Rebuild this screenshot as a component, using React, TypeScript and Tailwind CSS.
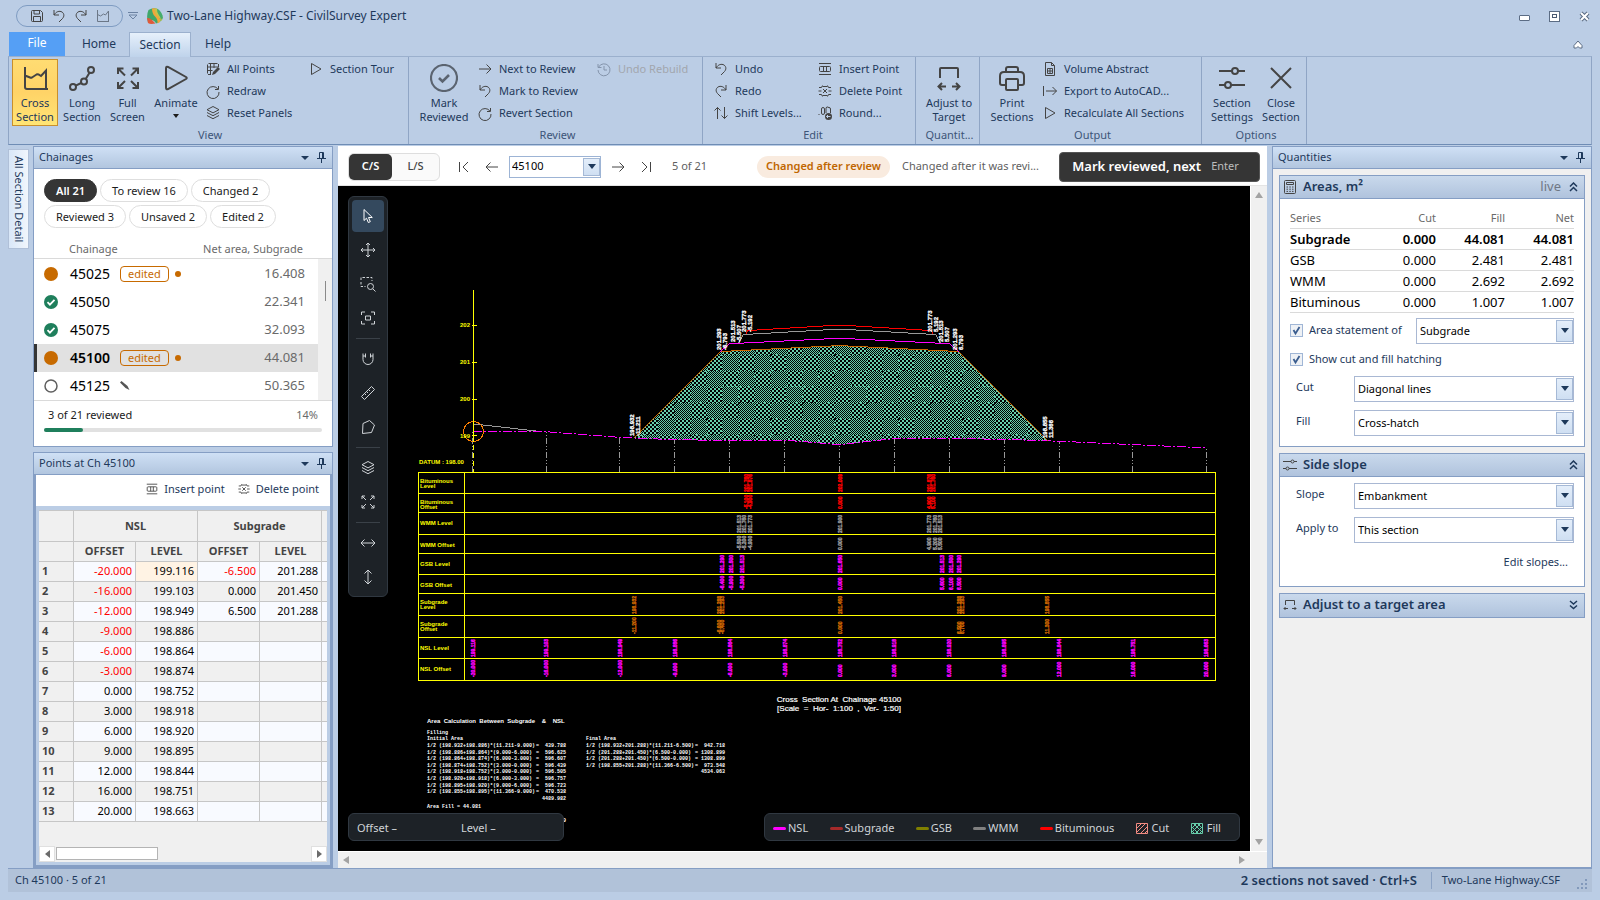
import React from 'react';

const INK = '#1e395b';

// ---------- Icons ----------

interface IconProps {
  size?: number;
  children: React.ReactNode;
  className?: string;
}

// Small line icons live on a 16 unit grid, the stroke is always 1 unit
const Icon: React.FC<IconProps> = ({ size = 16, children, className = 'text-[#444]' }) => (
  <svg width={size} height={size} viewBox="0 0 16 16" fill="none" stroke="currentColor" strokeLinejoin="round" className={`shrink-0 ${className}`} aria-hidden="true">
    {children}
  </svg>
);

const icons = {
  save: <path d="M2.5 3.5a1 1 0 0 1 1-1h8l2 2v8a1 1 0 0 1-1 1h-9a1 1 0 0 1-1-1zM5 2.5v3.5h5.500v-3.5M4.500 13.500v-5h7v5" />,
  undo: <path d="M3 2v5h5M3 7c2-3.500 5.500-4.500 8-3 2.500 1.700 2.300 4.500.5 6.500L8 14" />,
  redo: <path d="M13 2v5H8M13 7C11 3.500 7.500 2.500 5 4 2.500 5.700 2.700 8.500 4.500 10.500L8 14" />,
  chart: <path d="M2.500 2v11.500H14M2.500 6.500l3 1.500 3-2 2 1 3-4v10.500" />,
  play: <path d="M3.500 2.500v11l9.500-5.500z" />,
  refresh: <path d="M13.500 3v3.500H10M13 6.200A6 6 0 1 0 14 9" />,
  layers: <path d="M8 1.500l6 3.200-6 3.200-6-3.200zM2 7.500l6 3.200 6-3.200M2 10.500l6 3.200 6-3.200" />,
  table: (
    <>
      <path d="M3.500 2.500h9M2.500 6h11M2.500 9.500h5M5.500 2v11M9 2v5M3 13.500h3M2.500 3.500v9M13.500 3v3" />
      <path d="M7 14l1-3 5-5 2 2-5 5z" fill="currentColor" stroke="none" />
    </>
  ),
  arrowRight: <path d="M2 8h12M9.500 3.500L14 8l-4.500 4.500" />,
  arrowLeft: <path d="M14 8H2M6.500 3.500L2 8l4.500 4.500" />,
  first: <path d="M3.500 3v10M12 3L7 8l5 5" />,
  last: <path d="M12.500 3v10M4 3l5 5-5 5" />,
  history: <path d="M2 3v3.500h3.500M2.700 6A6 6 0 1 1 2 9M8 5v4h3" />,
  upDown: <path d="M4.500 14V2.500M1.500 5.500l3-3 3 3M11.500 2v11.500M8.500 10.500l3 3 3-3" />,
  insertRow: <path d="M2 2.500h12M2 13.500h12M3.500 5.500h9a1 1 0 0 1 1 1v3a1 1 0 0 1-1 1h-9a1 1 0 0 1-1-1v-3a1 1 0 0 1 1-1zM6.500 5.500v5M9.500 5.500v5" />,
  deleteRow: <path d="M2 4.500h2.500l1-2M14 4.500h-2.500l-1-2M5.500 3.500h5M2 11.500h2.500l1 2M14 11.500h-2.500l-1 2M5.500 12.500h5M1.500 8h3M11.500 8h3M6 6l4 4M10 6l-4 4" />,
  round: (
    <>
      <path d="M1.500 9.500h1M6 2.500a1.500 1.500 0 0 1 1.500 1.500v4a1.500 1.500 0 0 1-3 0V4A1.500 1.500 0 0 1 6 2.500zM12 2.500a1.500 1.500 0 0 1 1.500 1.500v4M9 8V4a1.500 1.500 0 0 1 3-1" />
      <circle cx="11.500" cy="11.500" r="3.500" fill="currentColor" stroke="none" />
      <path d="M13.500 11.500h-4M11 10l-1.500 1.500L11 13" stroke="#bbcde5" />
    </>
  ),
  sheet: <path d="M3.500 1.500h6l3 3v10h-9zM9.500 1.500v3h3M5.500 7.500h5v5h-5zM8 7.500v5M5.500 10h5" />,
  exportTo: <path d="M1.500 3v10M4 8h10.500M10.500 4L14.500 8l-4 4" />,
  target: <path d="M3.500 8V3.500h9V8M6 11.500H2M3.500 10L2 11.500 3.500 13M10 11.500h4M12.500 10l1.500 1.500-1.500 1.500" />,
  sliders: <path d="M1 4.500h8M12 4.500h3M1 11.500h3M7 11.500h8M9 4.500a1.500 1.500 0 1 0 3 0 1.500 1.500 0 1 0-3 0M4 11.500a1.500 1.500 0 1 0 3 0 1.500 1.500 0 1 0-3 0" />,
  calc: <path d="M3.500 1.500h9a1 1 0 0 1 1 1v11a1 1 0 0 1-1 1h-9a1 1 0 0 1-1-1v-11a1 1 0 0 1 1-1zM4.500 3.500h7v2h-7zM4.500 8h1.500M7.300 8h1.500M10 8h1.500M4.500 10.200h1.500M7.300 10.200h1.500M10 10.200h1.500M4.500 12.400h1.500M7.300 12.400h1.500M10 12.400h1.500" />,
  cursor: <path d="M4 1.500v11l2.500-2.300L8.300 14.500l2-.8-1.800-4.200h3.800z" />,
  move: <path d="M8 1v14M1 8h14M6 3l2-2 2 2M6 13l2 2 2-2M3 6L1 8l2 2M13 6l2 2-2 2" />,
  zoomArea: (
    <>
      <path d="M1 4V1.500h11V5M1 6v4.500h4.500" strokeDasharray="2.500 1.500" />
      <path d="M7.500 10.500a3 3 0 1 0 6 0 3 3 0 1 0-6 0M12.800 12.800l2.700 2.700" />
    </>
  ),
  fit: <path d="M1.500 5V2h3.500M11 2h3.500v3M14.500 11v3H11M5 14H1.500v-3M5.500 6h5v4h-5z" />,
  magnet: <path d="M3 2.500v6a5 5 0 0 0 10 0v-6M3 5h2.500M10.500 5H13M5.500 2.500v4M10.500 2.500v4" />,
  ruler: <path d="M1.500 11.500l10-10 3 3-10 10zM4.500 8.500l1.500 1.500M6.500 6.500l1.500 1.500M8.500 4.500l1.500 1.500" />,
  polygon: <path d="M3 4.500L9.500 1.500l5 4.500-3 7.500-9 1z" />,
  expand: <path d="M2 5V2h3M2 2l4 4M11 2h3v3M14 2l-4 4M14 11v3h-3M14 14l-4-4M5 14H2v-3M2 14l4-4" />,
  horizontal: <path d="M1 8h14M4.500 4.500L1 8l3.500 3.500M11.500 4.500L15 8l-3.500 3.500" />,
  vertical: <path d="M8 1v14M4.500 4.500L8 1l3.500 3.500M4.500 11.500L8 15l3.500-3.500" />,
};

// Large ribbon icons on a 28 unit grid
const bigIcons = {
  cross: <path d="M4 3v20q0 2 2 2h21M4 11.500l5 2q1 .5 2 0l4.500-3q1-.5 2 0l2.500 1.500 5-5.500V25" />,
  long: (
    <>
      <circle cx="5" cy="23" r="3" />
      <circle cx="16" cy="17.500" r="3" />
      <circle cx="23" cy="6" r="3" />
      <path d="M7.700 21.700l5.500-2.700M17.700 15l3.800-6.300" />
    </>
  ),
  full: <path d="M4 10V4.500h5.500M4 4.500l7 7M18.500 4.500H24V10M24 4.500l-7 7M24 18v6h-5.500M24 24l-7-7M9.500 24H4v-6M4 24l7-7" />,
  play: <path d="M4 4.500v19q0 2.500 2 1.500l18-10q1.500-1 0-2L6 3Q4 2 4 4.500z" />,
  check: (
    <>
      <circle cx="14" cy="14" r="13" />
      <path d="M9 14l3.500 3.500 6.500-6.500" strokeWidth="2.600" />
    </>
  ),
  target: <path d="M5 14V5q0-1 1-1h16q1 0 1 1v9M11 22.500H4M7 19l-3.500 3.500L7 26M17 22.500h7M21 19l3.500 3.500L21 26" />,
  print: <path d="M8 8V5q0-2 2-2h8q2 0 2 2v3M8 21H4q-2 0-2-2v-7q0-4 4-4h16q4 0 4 4v7q0 2-2 2h-4M8 16q0-1 1-1h10q1 0 1 1v9q0 1-1 1H9q-1 0-1-1z" />,
  sliders: <path d="M1 7h13M20 7h7M1 21h6M13 21h14M14 7a3 3 0 1 0 6 0 3 3 0 1 0-6 0M7 21a3 3 0 1 0 6 0 3 3 0 1 0-6 0" />,
  close: <path d="M4 4l20 20M24 4L4 24" />,
};

const DoubleChevron: React.FC<{ down?: boolean }> = ({ down }) => (
  <svg width="9" height="10" viewBox="0 0 9 10" fill="none" stroke={INK} strokeWidth="1.500" aria-hidden="true">
    <path d={down ? 'M1 1l3.500 3L8 1M1 5.500l3.500 3L8 5.500' : 'M1 4.500L4.500 1 8 4.500M1 9l3.500-3.500L8 9'} />
  </svg>
);

// ---------- Ribbon ----------

interface BigButtonProps {
  icon: keyof typeof bigIcons;
  lines: string[];
  width: string;
  active?: boolean;
  menu?: boolean;
}

const BigButton: React.FC<BigButtonProps> = ({ icon, lines, width, active, menu }) => (
  <button
    type="button"
    className={`flex h-[67px] shrink-0 flex-col items-center border pt-1 leading-[14px] ${width} ${
      active ? 'border-[#c98f2c] bg-linear-to-b from-[#ffdc72] via-[#ffd367] to-[#ffe575]' : 'border-transparent'
    }`}
  >
    <svg width="28" height="28" viewBox="0 0 28 28" fill="none" stroke={icon === 'check' ? '#5b6470' : '#444'} strokeWidth={icon === 'check' ? 2.2 : 2} aria-hidden="true" className="mb-1">
      {bigIcons[icon]}
    </svg>
    {lines.map((line) => (
      <span key={line} className="whitespace-nowrap">{line}</span>
    ))}
    {menu && <span className="mt-1 border-x-3 border-t-4 border-x-transparent border-t-[#1c1c1c]" />}
  </button>
);

interface SmallItem {
  icon: keyof typeof icons;
  label: string;
  disabled?: boolean;
}

const SmallColumn: React.FC<{ items: SmallItem[]; className?: string }> = ({ items, className = '' }) => (
  <div className={`-mt-px shrink-0 ${className}`}>
    {items.map((item) => (
      <button
        key={item.label}
        type="button"
        disabled={item.disabled}
        className={`flex h-[22px] items-center gap-[6px] whitespace-nowrap pl-[2px] ${item.disabled ? 'text-[#a2a6ad]' : ''}`}
      >
        <Icon className={item.disabled ? 'text-[#8494ab]' : 'text-[#444]'}>{icons[item.icon]}</Icon>
        {item.label}
      </button>
    ))}
  </div>
);

const RibbonGroup: React.FC<{ title: string; className: string; children: React.ReactNode }> = ({ title, className, children }) => (
  <section className={`flex shrink-0 flex-col border-r border-[#8fa5c5] ${className}`}>
    <div className="flex h-[70px] pt-[2px]">{children}</div>
    <div className="text-center leading-[16px] text-[#3d5578]">{title}</div>
  </section>
);

const Ribbon: React.FC = () => (
  <div className="mx-2 flex h-[89px] shrink-0 overflow-hidden border border-t-[#9bb0cd] border-r-[#8fa5c5] border-b-[#6f8db5] border-l-[#8fa5c5]">
    <RibbonGroup title="View" className="w-[400px] pl-[3px]">
      <BigButton icon="cross" lines={['Cross', 'Section']} width="w-[46px]" active />
      <BigButton icon="long" lines={['Long', 'Section']} width="w-[48px]" />
      <BigButton icon="full" lines={['Full', 'Screen']} width="w-[43px]" />
      <BigButton icon="play" lines={['Animate']} width="w-[54px]" menu />
      <SmallColumn
        className="w-[103px]"
        items={[
          { icon: 'table', label: 'All Points' },
          { icon: 'refresh', label: 'Redraw' },
          { icon: 'layers', label: 'Reset Panels' },
        ]}
      />
      <SmallColumn items={[{ icon: 'play', label: 'Section Tour' }]} />
    </RibbonGroup>
    <RibbonGroup title="Review" className="w-[294px] pl-1">
      <BigButton icon="check" lines={['Mark', 'Reviewed']} width="w-[62px]" />
      <SmallColumn
        className="w-[119px]"
        items={[
          { icon: 'arrowRight', label: 'Next to Review' },
          { icon: 'undo', label: 'Mark to Review' },
          { icon: 'refresh', label: 'Revert Section' },
        ]}
      />
      <SmallColumn items={[{ icon: 'history', label: 'Undo Rebuild', disabled: true }]} />
    </RibbonGroup>
    <RibbonGroup title="Edit" className="w-[213px] pl-2">
      <SmallColumn
        className="w-[104px]"
        items={[
          { icon: 'undo', label: 'Undo' },
          { icon: 'redo', label: 'Redo' },
          { icon: 'upDown', label: 'Shift Levels...' },
        ]}
      />
      <SmallColumn
        items={[
          { icon: 'insertRow', label: 'Insert Point' },
          { icon: 'deleteRow', label: 'Delete Point' },
          { icon: 'round', label: 'Round...' },
        ]}
      />
    </RibbonGroup>
    <RibbonGroup title="Quantit..." className="w-[64px] pl-1">
      <BigButton icon="target" lines={['Adjust to', 'Target']} width="w-[58px]" />
    </RibbonGroup>
    <RibbonGroup title="Output" className="w-[222px] pl-1">
      <BigButton icon="print" lines={['Print', 'Sections']} width="w-[56px]" />
      <SmallColumn
        items={[
          { icon: 'sheet', label: 'Volume Abstract' },
          { icon: 'exportTo', label: 'Export to AutoCAD...' },
          { icon: 'play', label: 'Recalculate All Sections' },
        ]}
      />
    </RibbonGroup>
    <RibbonGroup title="Options" className="w-[105px] pl-1">
      <BigButton icon="sliders" lines={['Section', 'Settings']} width="w-[52px]" />
      <BigButton icon="close" lines={['Close', 'Section']} width="w-[46px]" />
    </RibbonGroup>
  </div>
);

const TitleBar: React.FC = () => (
  <header className="flex h-8 shrink-0 items-center pl-4 pr-[10px]">
    <div className="flex h-[22px] w-[107px] items-center justify-center gap-[6px] rounded-full border border-[#7f9cc2]">
      {(['save', 'undo', 'redo', 'chart'] as const).map((name) => (
        <button key={name} type="button" aria-label={name}>
          <Icon className={name === 'chart' ? 'text-[#6b7787]' : 'text-[#444]'}>{icons[name]}</Icon>
        </button>
      ))}
    </div>
    <svg width="10" height="8" viewBox="0 0 10 8" fill="none" stroke="#6c83a3" className="ml-[5px]" aria-hidden="true">
      <path d="M0 .5h10M1 3l4 4 4-4z" />
    </svg>
    <svg width="16" height="16" viewBox="0 0 16 16" className="ml-[9px]" aria-hidden="true">
      <path d="M1.500 2Q5-.5 9.500.5q1 3 3 5.500t3.500 3.500q-1 4-7 6-1.500-3.500-5-3.500l-3 2.500q-2-7 .5-12.500z" fill="#3fa66a" />
      <path d="M0 10q2.500-.5 5 2l3.500 3.500Q3 16.500 1 15z" fill="#df5a3a" />
      <path d="M5 .5q2-.5 3 0 .5 4 3 7t2 6.500l-2.500 1.500q.5-4-2.500-7T5 .5z" fill="#f2a63b" />
      <path d="M7.500.5q2-.5 3 .5.500 3 3 5t1.500 6l-1.500 1.500q0-3-3-5.500T7.500.5z" fill="#c9c24a" />
      <path d="M10 .8q4 1.700 5.800 7.200-.3 2.500-1.800 4-.2-3-2.200-5T10 .8z" fill="#45ad6c" />
    </svg>
    <h1 className="ml-1 text-xs text-[#1e395b]">Two-Lane Highway.CSF - CivilSurvey Expert</h1>
    <div className="ml-auto flex items-center gap-[19px]">
      <button type="button" aria-label="Minimize" className="mt-1 h-[6px] w-[11px] rounded-[1px] border border-[#5b6c84] bg-white" />
      <button type="button" aria-label="Maximize" className="flex h-[11px] w-[11px] items-center justify-center border border-[#5b6c84] bg-white">
        <span className="h-[4px] w-[5px] border border-[#4a5a72]" />
      </button>
      <button type="button" aria-label="Close">
        <svg width="11" height="11" viewBox="0 0 11 11" aria-hidden="true">
          <path d="M2 2l7 7M9 2l-7 7" stroke="#5b6c84" strokeWidth="4" />
          <path d="M2 2l7 7M9 2l-7 7" stroke="#fff" strokeWidth="2" />
        </svg>
      </button>
    </div>
  </header>
);

const TabStrip: React.FC = () => (
  <nav className="mx-2 flex h-6 shrink-0 items-end text-xs">
    <a href="#file" className="ml-px flex h-[24px] w-[56px] items-center justify-center bg-[#559ff5] pb-[2px] text-white">File</a>
    <a href="#home" className="flex h-6 w-[64px] items-center justify-center pl-1">Home</a>
    <a href="#section" className="relative flex h-[25px] w-[62px] translate-y-px items-center justify-center border border-b-0 border-[#9bb0cd] bg-linear-to-b from-[#e6f0fb] to-[#bfd3eb]">Section</a>
    <a href="#help" className="flex h-6 w-[54px] items-center justify-center">Help</a>
    <button type="button" aria-label="Collapse ribbon" className="mb-[7px] ml-auto mr-[9px]">
      <svg width="10" height="9" viewBox="0 0 10 9" fill="#fff" stroke="#5b6c84" strokeLinejoin="round" aria-hidden="true">
        <path d="M5 1L1 5.500V8h2.500L5 6.500 6.500 8H9V5.500z" />
      </svg>
    </button>
  </nav>
);

// ---------- Docked panels ----------

const PanelHeader: React.FC<{ title: string }> = ({ title }) => (
  <div className="flex h-[22px] shrink-0 items-center border-b border-[#859ec4] bg-linear-to-b from-[#cfe0f5] to-[#b2c6df] pl-[5px] pr-[6px]">
    <h2>{title}</h2>
    <button type="button" aria-label={`${title} menu`} className="ml-auto">
      <span className="block border-x-4 border-t-4 border-x-transparent border-t-[#1e395b]" />
    </button>
    <button type="button" aria-label={`Pin ${title}`} className="ml-2">
      <svg width="9" height="11" viewBox="0 0 9 11" fill="none" stroke={INK} aria-hidden="true">
        <path d="M2.500 6.500v-6h4v6M5.500.5v6M0 6.500h9M4.500 6.500V11" />
      </svg>
    </button>
  </div>
);

const filters = [
  ['All 21', 'To review 16', 'Changed 2'],
  ['Reviewed 3', 'Unsaved 2', 'Edited 2'],
];

const chainages = [
  { ch: '45025', area: '16.408', state: 'changed', edited: true },
  { ch: '45050', area: '22.341', state: 'done' },
  { ch: '45075', area: '32.093', state: 'done' },
  { ch: '45100', area: '44.081', state: 'changed', edited: true, current: true },
  { ch: '45125', area: '50.365', state: 'open', pencil: true },
];

const StateDot: React.FC<{ state: string }> = ({ state }) => (
  <svg width="14" height="14" viewBox="0 0 14 14" aria-hidden="true">
    {state === 'open' ? (
      <circle cx="7" cy="7" r="6" fill="#fff" stroke="#5f5f5f" strokeWidth="1.500" />
    ) : (
      <circle cx="7" cy="7" r="7" fill={state === 'done' ? '#1f7f5c' : '#c76a00'} />
    )}
    {state === 'done' && <path d="M3.500 7.200l2.400 2.400 4.600-4.800" fill="none" stroke="#fff" strokeWidth="1.800" />}
  </svg>
);

const ChainagesPanel: React.FC = () => (
  <section className="flex shrink-0 flex-col border border-[#859ec4] bg-white">
    <PanelHeader title="Chainages" />
    <div className="space-y-[3px] px-[10px] pt-[10px]">
      {filters.map((row) => (
        <div key={row[0]} className="flex gap-[3px]">
          {row.map((label) => (
            <button
              key={label}
              type="button"
              className={`h-[23px] whitespace-nowrap rounded-full border px-[11px] pt-px ${
                label === 'All 21' ? 'border-[#353535] bg-[#353535] font-semibold text-white' : 'border-[#dedede] text-[#1b1b1b]'
              }`}
            >
              {label}
            </button>
          ))}
        </div>
      ))}
    </div>
    <div className="mt-[11px] flex h-5 items-center justify-between border-b border-[#dadada] pl-[35px] pr-[29px] pt-px text-[#6a6a6a]">
      <span>Chainage</span>
      <span>Net area, Subgrade</span>
    </div>
    <div className="flex border-b border-[#dadada]">
      <ul className="flex-1 pt-px">
        {chainages.map((row) => (
          <li
            key={row.ch}
            className={`flex h-7 items-center border-l-3 pl-[7px] pr-[13px] ${row.current ? 'border-[#353535] bg-[#e1e1e1]' : 'border-transparent'}`}
          >
            <StateDot state={row.state} />
            <span className={`ml-3 text-sm text-black ${row.current ? 'font-semibold' : ''}`}>{row.ch}</span>
            {row.edited && (
              <>
                <span className="ml-[10px] flex h-4 items-center rounded-[4px] border border-[#c76a00] px-[7px] text-[#c76a00]">edited</span>
                <span className="ml-[6px] h-[6px] w-[6px] rounded-full bg-[#c76a00]" />
              </>
            )}
            {row.pencil && (
              <svg width="10" height="10" viewBox="0 0 10 10" className="ml-[10px]" aria-hidden="true">
                <path d="M0 1.500l1.500-1.500 6 5 2 4-4-2z" fill="#555" />
              </svg>
            )}
            <span className="ml-auto text-[13px] text-[#6a6a6a]">{row.area}</span>
          </li>
        ))}
      </ul>
      <div className="w-[14px] bg-[#f0f0f0] pt-[22px]">
        <div className="mx-auto h-5 w-px bg-[#8a8a8a]" />
      </div>
    </div>
    <div className="px-[10px] pb-[14px] pt-[5px]">
      <div className="flex justify-between px-[4px] leading-[18px] text-[#1b1b1b]">
        <span>3 of 21 reviewed</span>
        <span className="text-[#6a6a6a]">14%</span>
      </div>
      <div className="mt-[4px] h-1 rounded-full bg-[#e1e1e1]">
        <div className="h-1 rounded-full bg-[#1f7f5c]" style={{ width: '14%' }} />
      </div>
    </div>
  </section>
);

const nsl: [string, string][] = [
  ['-20.000', '199.116'],
  ['-16.000', '199.103'],
  ['-12.000', '198.949'],
  ['-9.000', '198.886'],
  ['-6.000', '198.864'],
  ['-3.000', '198.874'],
  ['0.000', '198.752'],
  ['3.000', '198.918'],
  ['6.000', '198.920'],
  ['9.000', '198.895'],
  ['12.000', '198.844'],
  ['16.000', '198.751'],
  ['20.000', '198.663'],
];

const subgrade: [string, string][] = [
  ['-6.500', '201.288'],
  ['0.000', '201.450'],
  ['6.500', '201.288'],
];

const cell = 'border-b border-r border-[#c6c6c6] px-[3px]';

const PointsPanel: React.FC = () => (
  <section className="flex min-h-0 flex-1 flex-col border border-[#859ec4] bg-white">
    <PanelHeader title="Points at Ch 45100" />
    <div className="flex min-h-0 flex-1 flex-col border-2 border-[#859ec4] border-t-0 bg-[#bbcde5]">
      <div className="flex h-[31px] shrink-0 items-center justify-end gap-3 bg-white pb-[3px] pr-[11px]">
        <button type="button" className="flex items-center gap-[5px]">
          <Icon size={14}>{icons.insertRow}</Icon>
          Insert point
        </button>
        <button type="button" className="flex items-center gap-[5px]">
          <Icon size={14}>{icons.deleteRow}</Icon>
          Delete point
        </button>
      </div>
      <div className="mx-[3px] mb-[3px] mt-1 flex min-h-0 flex-1 flex-col overflow-hidden bg-[#f0f0f0]">
        <div className="min-h-0 flex-1 overflow-hidden">
          <table className="w-[407px] table-fixed border-separate border-spacing-0 border-t border-[#c6c6c6] text-black">
            <colgroup>
              <col className="w-[35px]" />
              <col className="w-[62px]" />
              <col className="w-[62px]" />
              <col className="w-[62px]" />
              <col className="w-[62px]" />
              <col className="w-[62px]" />
              <col className="w-[62px]" />
            </colgroup>
            <thead className="text-[#444]">
              <tr className="h-[31px]">
                <th className={cell} />
                <th className={cell} colSpan={2}>NSL</th>
                <th className={cell} colSpan={2}>Subgrade</th>
                <th className={cell} colSpan={2} />
              </tr>
              <tr className="h-5">
                <th className={cell} />
                <th className={cell}>OFFSET</th>
                <th className={cell}>LEVEL</th>
                <th className={cell}>OFFSET</th>
                <th className={cell}>LEVEL</th>
                <th className={cell} />
                <th className={cell} />
              </tr>
            </thead>
            <tbody>
              {nsl.map(([offset, level], i) => {
                const [sOffset, sLevel] = subgrade[i] ?? ['', ''];
                return (
                  <tr key={offset} className={`h-5 text-right ${i % 2 ? 'bg-[#f0f0f0]' : 'bg-[#f8faff]'}`}>
                    <th className={`${cell} bg-[#f0f0f0] text-left text-[#444]`}>{i + 1}</th>
                    <td className={`${cell} ${offset.startsWith('-') ? 'text-[#f00]' : ''}`}>{offset}</td>
                    <td className={`${cell} ${i === 0 ? 'bg-[#fff3e4]' : ''}`}>{level}</td>
                    <td className={`${cell} ${sOffset.startsWith('-') ? 'text-[#f00]' : ''}`}>{sOffset}</td>
                    <td className={cell}>{sLevel}</td>
                    <td className={cell} />
                    <td className={cell} />
                  </tr>
                );
              })}
            </tbody>
          </table>
        </div>
        <div className="flex h-[17px] shrink-0 items-center">
          <button type="button" aria-label="Scroll left" className="flex h-4 w-4 items-center justify-center border border-[#e0e0e0] bg-white">
            <span className="border-y-4 border-r-5 border-y-transparent border-r-[#6b6b6b]" />
          </button>
          <div className="ml-px h-[13px] w-[102px] border border-[#b4b4b4] bg-white" />
          <button type="button" aria-label="Scroll right" className="ml-auto flex h-4 w-4 items-center justify-center border border-[#e0e0e0] bg-white">
            <span className="border-y-4 border-l-5 border-y-transparent border-l-[#6b6b6b]" />
          </button>
        </div>
      </div>
    </div>
  </section>
);

// ---------- Section drawing ----------

// World metres to drawing units
const px = (offset: number) => 839.5 + offset * 18.33;
const py = (level: number) => 435.5 - (level - 199) * 36.7;
const toPoints = (pts: number[][]) => pts.map(([o, l]) => `${px(o)},${py(l)}`).join(' ');

const nslPoints = nsl.map(([o, l]) => [Number(o), Number(l)]);
const subgradeLine = [[-11.211, 198.932], [-6.5, 201.288], [0, 201.45], [6.5, 201.288], [11.366, 198.855]];
const gsbLine = [[-6.5, 201.288], [-6.0, 201.5], [0, 201.65], [6.0, 201.5], [6.5, 201.288]];
const wmmLine = [[-5.507, 201.513], [-5.25, 201.75], [0, 201.9], [5.25, 201.75], [5.507, 201.513]];
const bituminousLine = [[-5.1, 201.76], [-5.0, 201.86], [0, 202.01], [5.0, 201.86], [5.1, 201.76]];
const fillOutline = [...subgradeLine, [9, 198.895], [6, 198.92], [3, 198.918], [0, 198.752], [-3, 198.874], [-6, 198.864], [-9, 198.886]];

const rowEdges = [472, 493, 512, 534, 553, 574, 593, 615, 637, 658, 680];
const rowLabels = [
  ['Bituminous', 'Level'],
  ['Bituminous', 'Offset'],
  ['WMM Level'],
  ['WMM Offset'],
  ['GSB Level'],
  ['GSB Offset'],
  ['Subgrade', 'Level'],
  ['Subgrade', 'Offset'],
  ['NSL Level'],
  ['NSL Offset'],
];

// One entry per pair of table rows: level row index, colour and points
const bands: { row: number; color: string; points: [number, string][] }[] = [
  { row: 0, color: '#f00', points: [[-5.1, '201.760'], [-4.9, '201.876'], [0, '202.009'], [4.9, '201.876'], [5.1, '201.760']] },
  { row: 2, color: '#999', points: [[-5.5, '201.513'], [-5.2, '201.760'], [-4.9, '201.773'], [0, '201.900'], [4.9, '201.773'], [5.2, '201.760'], [5.5, '201.513']] },
  { row: 4, color: '#f0f', points: [[-6.4, '201.290'], [-5.9, '201.500'], [-5.3, '201.513'], [0, '201.650'], [5.6, '201.513'], [6.1, '201.500'], [6.5, '201.290']] },
  { row: 6, color: '#cc6600', points: [[-11.2, '198.932'], [-6.6, '201.288'], [-6.4, '201.293'], [0, '201.450'], [6.5, '201.288'], [6.7, '201.293'], [11.3, '198.855']] },
  { row: 8, color: '#f0f', points: nsl.map(([o, l]) => [Number(o), l] as [number, string]) },
];

const slopeNotes: { x: number; y: number; lines: [string, string] }[] = [
  { x: 632, y: 436, lines: ['198.932', '-11.211'] },
  { x: 719, y: 350, lines: ['201.293', '-6.793'] },
  { x: 733, y: 342, lines: ['201.513', '-5.507'] },
  { x: 744, y: 332, lines: ['201.773', '-5.192'] },
  { x: 930, y: 332, lines: ['201.773', '5.192'] },
  { x: 941, y: 342, lines: ['201.513', '5.507'] },
  { x: 955, y: 350, lines: ['201.293', '6.793'] },
  { x: 1045, y: 438, lines: ['198.855', '11.366'] },
];

const initialArea: [string, string][] = [
  ['1/2 (198.932+198.886)*(11.211-9.000)', '439.788'],
  ['1/2 (198.886+198.864)*(9.000-6.000)', '596.625'],
  ['1/2 (198.864+198.874)*(6.000-3.000)', '596.607'],
  ['1/2 (198.874+198.752)*(3.000-0.000)', '596.439'],
  ['1/2 (198.918+198.752)*(3.000-0.000)', '596.505'],
  ['1/2 (198.920+198.918)*(6.000-3.000)', '596.757'],
  ['1/2 (198.895+198.920)*(9.000-6.000)', '596.723'],
  ['1/2 (198.855+198.895)*(11.366-9.000)', '470.538'],
];

const finalArea: [string, string][] = [
  ['1/2 (198.932+201.288)*(11.211-6.500)', '942.718'],
  ['1/2 (201.288+201.450)*(6.500-0.000)', '1308.899'],
  ['1/2 (201.288+201.450)*(6.500-0.000)', '1308.899'],
  ['1/2 (198.855+201.288)*(11.366-6.500)', '973.548'],
];

const AreaSum: React.FC<{ x: number; title: string; rows: [string, string][]; total: string }> = ({ x, title, rows, total }) => (
  <g className="text-[5px] font-bold">
    <text x={x} y={740}>{title}</text>
    {rows.map(([formula, value], i) => (
      <g key={i}>
        <text x={x} y={747 + i * 6.6}>{formula}</text>
        <text x={x + 109} y={747 + i * 6.6}>=</text>
        <text x={x + 139} y={747 + i * 6.6} textAnchor="end">{value}</text>
      </g>
    ))}
    <text x={x + 139} y={747 + rows.length * 6.6} textAnchor="end">{total}</text>
  </g>
);

// Fine and coarse checks alternate in diamond shaped zones
const TILE = 64;
const hatchTile = () => {
  const turn = (2 * Math.PI) / (TILE / 2);
  let d = '';
  for (let y = 0; y < TILE; y++) {
    for (let x = 0; x < TILE; x++) {
      const coarse = Math.sin((x + y) * turn) + Math.sin((x - y) * turn) > 0;
      const on = coarse ? ((x >> 1) + (y >> 1)) % 2 : (x + y) % 2;
      if (on) d += `M${x} ${y}h1v1h-1z`;
    }
  }
  return d;
};

const SectionDrawing: React.FC = () => (
  <svg viewBox="338 186 912 665" className="block h-full w-full font-['Liberation_Sans',sans-serif]" fill="none" role="img" aria-label="Cross section at chainage 45100">
    <pattern id="cross-hatch" x="338" y="186" width={TILE} height={TILE} patternUnits="userSpaceOnUse">
      <path d={hatchTile()} fill="#66cdaa" shapeRendering="crispEdges" />
    </pattern>

    {/* Drop lines from ground to the table */}
    <g stroke="#999" strokeDasharray="6 2 1 2 1 2" shapeRendering="crispEdges">
      {nslPoints.map(([o, l]) => (
        <path key={o} d={`M${Math.floor(px(o))}.500 472V${py(l)}`} />
      ))}
    </g>

    <polygon points={toPoints(fillOutline)} fill="url(#cross-hatch)" shapeRendering="crispEdges" />

    <g shapeRendering="crispEdges">
      <polyline points={toPoints(nslPoints)} stroke="#f0f" strokeDasharray="9 2 2 2" />
      <polyline points="474,424 536,431" stroke="#999" />
      <polyline points={toPoints(subgradeLine)} stroke="#cc6600" />
      <polyline points={toPoints(gsbLine)} stroke="#f0f" />
      <polyline points={toPoints(wmmLine)} stroke="#999" />
      <polyline points={toPoints(bituminousLine)} stroke="#f00" />
      <circle cx="473.500" cy="431.500" r="10" stroke="#ff8000" />
    </g>

    {/* Level axis and table frame */}
    <g stroke="#ff0" shapeRendering="crispEdges">
      <path d="M473.500 290v147M472 325.500h5M472 362.500h5M472 399.500h5M472 435.500h5" />
      <path d="M473.500 437v35" strokeDasharray="5 3" />
      <path d="M418.500 472v208M464.500 472v208M1215.500 472v208" />
      {rowEdges.map((y) => (
        <path key={y} d={`M418 ${y}.500h798`} />
      ))}
    </g>

    <g fill="#ff0" className="text-[6px] font-bold">
      {[202, 201, 200, 199].map((level) => (
        <text key={level} x="470" y={py(level) + 2} textAnchor="end">{level}</text>
      ))}
      <text x="419" y="464">DATUM : 198.00</text>
      {rowLabels.map((lines, i) =>
        lines.map((line, j) => (
          <text key={`${i}-${j}`} x="420" y={(lines.length === 2 ? 483 : 485) + (rowEdges[i] - 472) + j * 5}>{line}</text>
        )),
      )}
    </g>

    {/* Rotated table values */}
    <g className="text-[5px] font-bold" strokeWidth="0.400">
      {bands.map((band) =>
        band.points.map(([offset, level]) => (
          <g key={`${band.row}-${offset}`} fill={band.color} stroke={band.color}>
            <text transform={`translate(${px(offset) + 2} ${rowEdges[band.row + 1] - 1}) rotate(-90)`}>{level}</text>
            <text transform={`translate(${px(offset) + 2} ${rowEdges[band.row + 2] - 3}) rotate(-90)`}>{offset.toFixed(3)}</text>
          </g>
        )),
      )}
    </g>

    <g fill="#fff" stroke="#fff" strokeWidth="0.300" className="text-[6px] font-bold">
      {slopeNotes.map((note) => (
        <g key={note.x} transform={`translate(${note.x + 2} ${note.y}) rotate(-90)`}>
          <text>{note.lines[0]}</text>
          <text y="6">{note.lines[1]}</text>
        </g>
      ))}
    </g>

    <g fill="#fff" stroke="#fff" strokeWidth="0.200" className="text-[8px]" textAnchor="middle">
      <text x="839" y="702" className="whitespace-pre">Cross  Section At  Chainage 45100</text>
      <text x="839" y="711" className="whitespace-pre">[Scale  =  Hor-  1:100  ,  Ver-  1:50]</text>
    </g>

    <g fill="#fff" className="font-['Liberation_Mono',monospace]">
      <text x="427" y="723" className="text-[6px] font-['Liberation_Sans',sans-serif] font-bold whitespace-pre">Area  Calculation  Between  Subgrade    &amp;    NSL</text>
      <text x="427" y="734" className="text-[5px] font-bold">Filling</text>
      <AreaSum x={427} title="Initial Area" rows={initialArea} total="4489.982" />
      <AreaSum x={586} title="Final Area" rows={finalArea} total="4534.063" />
      <text x="427" y="808" className="text-[5px] font-bold">Area Fill = 44.081</text>
      <text x="566" y="822" className="text-[6px] font-bold" textAnchor="end">0</text>
    </g>
  </svg>
);

// ---------- Centre ----------

const toolGroups: (keyof typeof icons)[][] = [
  ['cursor', 'move', 'zoomArea', 'fit'],
  ['magnet', 'ruler', 'polygon'],
  ['layers', 'expand'],
  ['horizontal', 'vertical'],
];

const series = [
  { name: 'NSL', color: '#ff00ff' },
  { name: 'Subgrade', color: '#a52a2a' },
  { name: 'GSB', color: '#808000' },
  { name: 'WMM', color: '#808080' },
  { name: 'Bituminous', color: '#ff0000' },
];

const DropButton: React.FC = () => (
  <span className="pointer-events-none absolute inset-y-[2px] right-px flex w-[17px] items-center justify-center border border-[#a5b9d6] bg-linear-to-b from-[#e4eefa] to-[#cfdff2]">
    <span className="border-x-4 border-t-5 border-x-transparent border-t-[#1e395b]" />
  </span>
);

const SectionToolbar: React.FC = () => (
  <div className="flex h-10 shrink-0 items-center border-b border-[#e4e4e4] bg-white pl-[10px] pr-[7px] pt-[2px] text-[#444]">
    <div className="flex h-7 w-[92px] shrink-0 rounded-[6px] border border-[#dedede] bg-[#fafafa]">
      <button type="button" className="w-[43px] rounded-[5px] bg-[#353535] font-semibold text-white">C/S</button>
      <button type="button" className="flex-1 font-medium">L/S</button>
    </div>
    <button type="button" aria-label="First section" className="ml-4"><Icon>{icons.first}</Icon></button>
    <button type="button" aria-label="Previous section" className="ml-3"><Icon>{icons.arrowLeft}</Icon></button>
    <div className="relative ml-[9px] w-[92px] shrink-0">
      <select aria-label="Chainage" className="h-[22px] w-full appearance-none border border-[#9db4d5] bg-white pl-[2px] text-[11px] text-black">
        <option>45100</option>
      </select>
      <DropButton />
    </div>
    <button type="button" aria-label="Next section" className="ml-[9px]"><Icon>{icons.arrowRight}</Icon></button>
    <button type="button" aria-label="Last section" className="ml-3"><Icon>{icons.last}</Icon></button>
    <span className="ml-[18px] whitespace-nowrap text-[#5f5f5f]">5 of 21</span>
    <span className="ml-auto flex h-[22px] w-[133px] shrink-0 items-center justify-center whitespace-nowrap rounded-full bg-[#f9ebdf] font-semibold text-[#c06600]">Changed after review</span>
    <span className="ml-3 whitespace-nowrap text-[#5f5f5f]">Changed after it was revi...</span>
    <button type="button" className="ml-5 flex h-[30px] w-[201px] shrink-0 items-center justify-center gap-[10px] whitespace-nowrap rounded-[4px] border border-[#555] bg-[#353535] pr-2 text-[13px] font-semibold text-white">
      Mark reviewed, next
      <kbd className="font-['Noto_Sans',sans-serif] text-[11px] font-normal text-[#bdbdbd]">Enter</kbd>
    </button>
  </div>
);

const Centre: React.FC = () => (
  <main className="flex min-w-0 flex-1 flex-col bg-[#f0f0f0]">
    <SectionToolbar />
    <div className="flex min-h-0 flex-1">
      <div className="relative min-w-0 flex-1 bg-black">
        <SectionDrawing />

        <div className="absolute left-[10px] top-[10px] w-10 rounded-[6px] border border-[#303841] bg-[#1d2227] px-[3px] py-[3px]">
          {toolGroups.map((group, i) => (
            <div key={group[0]}>
              {i > 0 && <hr className="mx-1 my-1 border-[#3a4148]" />}
              <div className="space-y-[2px]">
                {group.map((name) => (
                  <button
                    key={name}
                    type="button"
                    aria-label={name}
                    className={`flex h-8 w-8 items-center justify-center rounded-[4px] ${name === 'cursor' ? 'bg-[#34495e]' : ''}`}
                  >
                    <Icon className={name === 'cursor' ? 'text-white' : 'text-[#d0d4d8]'}>{icons[name]}</Icon>
                  </button>
                ))}
              </div>
            </div>
          ))}
        </div>

        <div className="absolute bottom-[10px] left-[10px] flex h-7 w-[216px] items-center rounded-[6px] border border-[#303841] bg-[#1d2227] pl-2 pt-[2px] text-[#d0d4d8]">
          <span className="w-[104px]">Offset –</span>
          <span>Level –</span>
        </div>

        <div className="absolute bottom-[10px] right-[10px] flex h-7 w-[476px] items-center justify-between rounded-[6px] border border-[#303841] bg-[#1d2227] pl-2 pr-[18px] pt-[2px] text-[#d0d4d8]">
          {series.map((s) => (
            <span key={s.name} className="flex items-center gap-[2px]">
              <span className="h-[3px] w-[13px] rounded-full" style={{ background: s.color }} />
              {s.name}
            </span>
          ))}
          <span className="flex items-center gap-1">
            <svg width="12" height="11" viewBox="0 0 12 11" fill="none" stroke="#f28b82" aria-hidden="true">
              <path d="M.5.5h11v10H.5zM0 6l6-6M0 10L10 0M4 11l8-8M8 11l4-4" />
            </svg>
            Cut
          </span>
          <span className="flex items-center gap-1">
            <svg width="12" height="11" viewBox="0 0 12 11" fill="none" stroke="#66cdaa" aria-hidden="true">
              <path d="M.5.5h11v10H.5zM0 6l6-6M0 10L10 0M4 11l8-8M8 11l4-4M6 0l6 6M2 0l10 10M0 3l8 8M0 7l4 4" />
            </svg>
            Fill
          </span>
        </div>
      </div>
      <div className="flex w-[17px] shrink-0 flex-col items-center justify-between border-l border-white py-[6px]">
        <span className="border-x-4 border-b-6 border-x-transparent border-b-[#a3a3a3]" />
        <span className="border-x-4 border-t-6 border-x-transparent border-t-[#a3a3a3]" />
      </div>
    </div>
    <div className="flex h-[17px] shrink-0 items-center justify-between border-t border-white pl-[5px] pr-[22px]">
      <span className="border-y-4 border-r-6 border-y-transparent border-r-[#a3a3a3]" />
      <span className="border-y-4 border-l-6 border-y-transparent border-l-[#a3a3a3]" />
    </div>
  </main>
);

// ---------- Quantities ----------

interface GroupBoxProps {
  icon: keyof typeof icons;
  title: string;
  note?: string;
  children?: React.ReactNode;
}

const GroupBox: React.FC<GroupBoxProps> = ({ icon, title, note, children }) => (
  <section className="border border-[#859ec4] bg-white">
    <div className={`flex h-[23px] items-center bg-linear-to-b from-[#c9d9ec] to-[#b0c3dd] pl-[2px] pr-[6px] ${children ? 'border-b border-[#859ec4]' : ''}`}>
      <Icon>{icons[icon]}</Icon>
      <h3 className="ml-[5px] text-[13px] font-semibold">{title}</h3>
      <span className="ml-auto mr-2 text-[13px] text-[#6f7784]">{note}</span>
      <button type="button" aria-label={`Toggle ${title}`}>
        <DoubleChevron down={!children} />
      </button>
    </div>
    {children}
  </section>
);

interface FieldProps {
  id: string;
  label: string;
  value: string;
}

const Field: React.FC<FieldProps> = ({ id, label, value }) => (
  <div className="flex pl-[6px]">
    <label htmlFor={id} className="w-[58px] pt-[2px] leading-[18px]">{label}</label>
    <div className="relative flex-1">
      <select id={id} className="h-[26px] w-full appearance-none border border-[#a9b8d3] bg-white pl-[3px] pt-px text-[11px] text-black">
        <option>{value}</option>
      </select>
      <DropButton />
    </div>
  </div>
);

const Check: React.FC<{ id: string; label: string }> = ({ id, label }) => (
  <span className="flex items-center gap-[6px]">
    <span className="relative flex h-[13px] w-[13px]">
      <input id={id} type="checkbox" defaultChecked className="h-[13px] w-[13px] appearance-none border border-[#a0b6d6] bg-[#eef1f5]" />
      <svg width="13" height="13" viewBox="0 0 13 13" fill="none" stroke="#3b5d8f" strokeWidth="1.800" className="pointer-events-none absolute inset-0" aria-hidden="true">
        <path d="M3.500 6l2 3.500L9.500 3" />
      </svg>
    </span>
    <label htmlFor={id} className="whitespace-nowrap">{label}</label>
  </span>
);

const areas = [
  ['Subgrade', '0.000', '44.081', '44.081'],
  ['GSB', '0.000', '2.481', '2.481'],
  ['WMM', '0.000', '2.692', '2.692'],
  ['Bituminous', '0.000', '1.007', '1.007'],
];

const QuantitiesPanel: React.FC = () => (
  <aside className="flex w-[320px] shrink-0 flex-col border border-[#859ec4] bg-[#f0f0f0]">
    <PanelHeader title="Quantities" />
    <div className="space-y-[6px] p-[6px]">
      <GroupBox icon="calc" title="Areas, m²" note="live">
        <div className="px-[10px] pb-[10px] pt-[9px]">
          <table className="w-full text-[13px] text-black">
            <thead className="text-[11px] text-[#6a6a6a]">
              <tr className="h-5 border-b border-[#dadada]">
                <th className="text-left font-normal">Series</th>
                <th className="w-[69px] text-right font-normal">Cut</th>
                <th className="w-[69px] text-right font-normal">Fill</th>
                <th className="w-[69px] text-right font-normal">Net</th>
              </tr>
            </thead>
            <tbody>
              {areas.map(([name, ...values], i) => (
                <tr key={name} className={`h-[21px] border-b border-[#dadada] leading-5 ${i === 0 ? 'font-semibold' : ''}`}>
                  <td>{name}</td>
                  {values.map((value, j) => (
                    <td key={j} className="text-right">{value}</td>
                  ))}
                </tr>
              ))}
            </tbody>
          </table>
          <div className="mt-[5px] flex items-center justify-between">
            <Check id="area-statement" label="Area statement of" />
            <div className="relative w-[158px]">
              <select aria-label="Area statement series" className="h-[26px] w-full appearance-none border border-[#a9b8d3] bg-white pl-[3px] pt-px text-[11px] text-black">
                <option>Subgrade</option>
              </select>
              <DropButton />
            </div>
          </div>
          <div className="flex h-8 items-center">
            <Check id="show-hatching" label="Show cut and fill hatching" />
          </div>
          <div className="space-y-2">
            <Field id="cut-hatch" label="Cut" value="Diagonal lines" />
            <Field id="fill-hatch" label="Fill" value="Cross-hatch" />
          </div>
        </div>
      </GroupBox>
      <GroupBox icon="sliders" title="Side slope">
        <div className="space-y-2 px-[10px] pb-[15px] pt-[6px]">
          <Field id="slope" label="Slope" value="Embankment" />
          <Field id="apply-to" label="Apply to" value="This section" />
          <div className="pr-[6px] pt-[2px] text-right">
            <button type="button" className="leading-[18px]">Edit slopes...</button>
          </div>
        </div>
      </GroupBox>
      <GroupBox icon="target" title="Adjust to a target area" />
    </div>
  </aside>
);

// ---------- Page ----------

const App: React.FC = () => (
  <div className="flex h-screen flex-col overflow-hidden bg-[#bbcde5] font-['Noto_Sans','Open_Sans',sans-serif] text-[11px] text-[#1e395b]">
    <TitleBar />
    <TabStrip />
    <Ribbon />
    <div className="mx-2 mt-px flex min-h-0 flex-1">
      <div className="w-[25px] shrink-0">
        <button type="button" className="mt-[3px] h-[100px] w-[21px] border border-[#b0c0d8] bg-linear-to-r from-[#d9e7f8] to-[#f1f6fc] [writing-mode:vertical-rl]">
          All Section Detail
        </button>
      </div>
      <div className="mr-[5px] flex w-[300px] shrink-0 flex-col gap-[5px]">
        <ChainagesPanel />
        <PointsPanel />
      </div>
      <Centre />
      <div className="w-[5px] shrink-0" />
      <QuantitiesPanel />
    </div>
    <footer className="mx-2 mb-2 flex h-6 shrink-0 items-center border-t border-[#859ec4] bg-[#b1c2d9] pl-[7px] pr-1">
      <span>Ch 45100 · 5 of 21</span>
      <strong className="ml-auto pr-[14px] text-[13px] font-semibold">2 sections not saved · Ctrl+S</strong>
      <span className="border-l border-[#8ba2c4] pl-[10px]">Two-Lane Highway.CSF</span>
      <svg width="12" height="12" viewBox="0 0 12 12" fill="#8299bb" className="ml-4 mt-2" aria-hidden="true">
        <path d="M9 0h2v2H9zM5 4h2v2H5zM9 4h2v2H9zM1 8h2v2H1zM5 8h2v2H5zM9 8h2v2H9z" />
      </svg>
    </footer>
  </div>
);

export default App;
